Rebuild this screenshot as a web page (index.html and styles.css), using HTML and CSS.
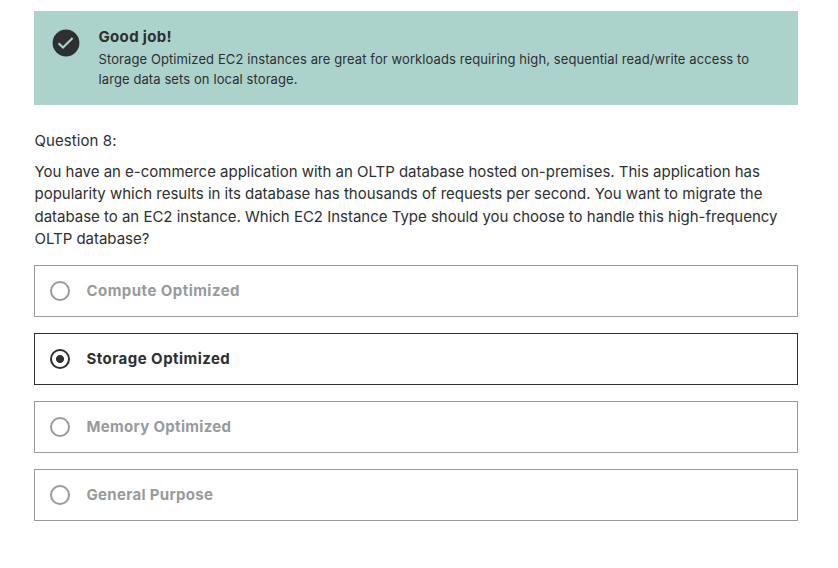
FILE: index.html
```html
<!DOCTYPE html>
<html lang="en">
<head>
<meta charset="utf-8">
<title>Quiz</title>
<link rel="stylesheet" href="styles.css">
</head>
<body>
<main class="quiz">
  <section class="alert">
    <svg class="alert-icon" viewBox="0 0 28 28"><circle cx="14" cy="14" r="13.4" fill="#2d2f31"/><path d="M6.6 14.2l4.4 4.4 9.6-9.6" fill="none" stroke="#acd2cc" stroke-width="2.1"/></svg>
    <div class="alert-body">
      <h2 class="alert-title">Good job!</h2>
      <p class="alert-text">Storage Optimized EC2 instances are great for workloads requiring high, sequential read/write access to<br>large data sets on local storage.</p>
    </div>
  </section>
  <p class="label">Question 8:</p>
  <p class="prompt">You have an e-commerce application with an OLTP database hosted on-premises. This application has<br>popularity which results in its database has thousands of requests per second. You want to migrate the<br>database to an EC2 instance. Which EC2 Instance Type should you choose to handle this high-frequency<br>OLTP database?</p>
  <ul class="answers">
    <li class="answer"><span class="radio"></span><span class="wide">Compute Optimized</span></li>
    <li class="answer selected"><span class="radio"></span><span class="wide">Storage Optimized</span></li>
    <li class="answer"><span class="radio"></span><span>Memory Optimized</span></li>
    <li class="answer"><span class="radio"></span><span>General Purpose</span></li>
  </ul>
</main>
</body>
</html>
```
FILE: styles.css
```css
* { box-sizing: border-box; margin: 0; padding: 0; }
body { background: #fff; color: #2d2f31; font-family: Inter, "Liberation Sans", sans-serif; }
.quiz { width: 764px; margin: 11px 0 0 34px; }
.alert { display: flex; height: 94px; padding: 16px 16px 0 18px; background: #acd2cc; }
.alert-icon { width: 28px; height: 28px; margin-top: 2px; flex: none; }
.alert-body { margin-left: 18.5px; white-space: nowrap; }
.alert-title { font-size: 15px; line-height: 20px; font-weight: 700; letter-spacing: 0.33px; }
.alert-text { font-size: 13px; line-height: 20px; margin-top: 2px; letter-spacing: 0.095px; }
.label { margin-top: 25px; padding-left: 0.5px; font-size: 15px; line-height: 22px; letter-spacing: 0.08px; }
.prompt { margin-top: 9px; padding-left: 0.5px; font-size: 15px; line-height: 22.4px; letter-spacing: -0.015px; white-space: nowrap; }
.answers { list-style: none; display: grid; gap: 16px; margin-top: 14px; }
.answer { display: flex; align-items: center; height: 52px; padding-left: 15px; border: 1px solid #989a9b; color: #989a9b; font-size: 15px; font-weight: 700; letter-spacing: 0.32px; gap: 16.5px; }
.wide { letter-spacing: 0.46px; }
.radio { width: 20px; height: 20px; border: 2px solid #989a9b; border-radius: 50%; }
.selected { border-color: #2d2f31; color: #2d2f31; }
.selected .radio { border-color: #2d2f31; background: radial-gradient(circle, #2d2f31 0 3.6px, transparent 4.4px); }
```
